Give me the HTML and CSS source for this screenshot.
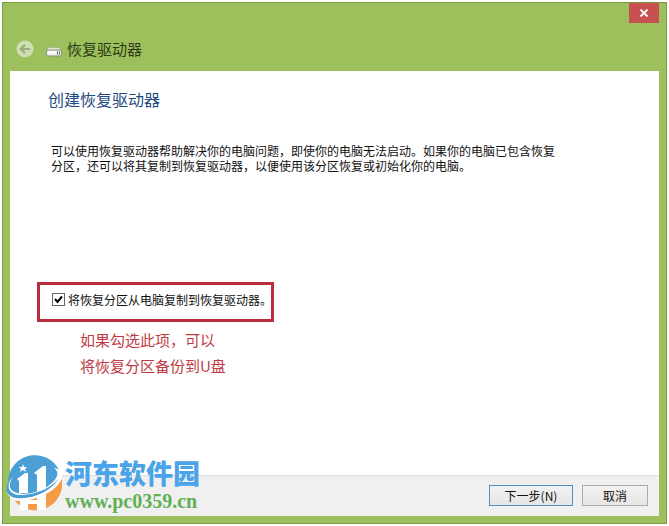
FILE: index.html
```
<!DOCTYPE html>
<html lang="zh-CN">
<head>
  <meta charset="UTF-8">
  <meta name="viewport" content="width=device-width, initial-scale=1.0">
  <title>恢复驱动器</title>
  <link rel="stylesheet" href="styles.css">
</head>
<body>
  <div class="window">
    <!-- Title bar -->
    <header class="titlebar">
      <button type="button" class="close" aria-label="关闭">
        <svg width="10" height="8" viewBox="0 0 10 8"><path d="M1.5 0.5 L8.5 7.5 M8.5 0.5 L1.5 7.5" stroke="#fff" stroke-width="1.8"/></svg>
      </button>
      <div class="caption">
        <button type="button" class="back" aria-label="返回">
          <svg width="18" height="18" viewBox="0 0 18 18">
            <circle cx="9" cy="9" r="8.5" fill="#cfdeb2"/>
            <path d="M14 9 H5 M9 4.8 L4.8 9 L9 13.2" fill="none" stroke="#98b17a" stroke-width="2.2"/>
          </svg>
        </button>
        <svg class="drive" width="16" height="10" viewBox="0 0 16 10">
          <path d="M2.5 0.5 H13.5 L15.5 4 H0.5 Z" fill="#e3e9d6" stroke="#a3aa94" stroke-width="0.6"/>
          <rect x="0.5" y="3" width="15" height="6" rx="1.5" fill="#eceee9" stroke="#858d7b"/>
          <path d="M2 5.5 H10" stroke="#fff" stroke-width="2"/>
          <path d="M11.5 4.5 V7.5 M13.5 4.5 V7.5" stroke="#5d6658"/>
        </svg>
        <span class="name">恢复驱动器</span>
      </div>
    </header>

    <!-- Page content -->
    <main class="page">
      <h1>创建恢复驱动器</h1>
      <p class="intro">可以使用恢复驱动器帮助解决你的电脑问题，即使你的电脑无法启动。如果你的电脑已包含恢复分区，还可以将其复制到恢复驱动器，以便使用该分区恢复或初始化你的电脑。</p>
      <div class="option">
        <input type="checkbox" id="copyPartition" checked>
        <label for="copyPartition">将恢复分区从电脑复制到恢复驱动器。</label>
      </div>
      <p class="note">如果勾选此项，可以<br>将恢复分区备份到U盘</p>
    </main>

    <!-- Buttons -->
    <footer class="actions">
      <button type="button" class="btn next">下一步(N)</button>
      <button type="button" class="btn cancel">取消</button>
    </footer>
  </div>

  <!-- Site watermark -->
  <div class="watermark">
    <svg width="58" height="58" viewBox="0 0 58 58">
      <!-- sky and ground halves -->
      <path d="M4 26 A27 27 0 0 1 57 20 C50 32 36 38 22 39 C10 39 4 35 4 26 Z" fill="#4b9fd5"/>
      <path d="M11 46 C30 46 49 37 58 24 A27 27 0 0 1 11 46 Z" fill="#f59b46"/>
      <!-- orbit -->
      <path d="M10 21 C4 27 4 35 12 38 C26 42 48 33 53 21 C54 18 53 15 50 13 C58 14 60 20 56 27 C48 39 29 47 13 45 C-1 42 1 29 10 21 Z" fill="#fff"/>
      <path d="M6 25 C0 32 1 41 12 43 C29 45 49 35 55 23 C50 31 32 40 17 40 C7 40 2 34 6 25 Z" fill="#4b9fd5"/>
      <!-- towers -->
      <path d="M13 24 L21 18 H24 V38 H15 V26 Z M30 18 L39 11 H42 V34 L33 37 V20 Z" fill="#fff"/>
      <path d="M16 44 L24 43 V45 H33 V41 L42 37 V55 H33 V49 H24 V55 H16 Z" fill="#fff"/>
      <path d="M19 9 L20 12 L23 12 L21 14 L22 17 L19 15 L16 17 L17 14 L15 12 L18 12 Z" fill="#fff"/>
    </svg>
    <div class="site">
      <span class="site-name">河东软件园</span>
      <span class="site-url">www.pc0359.cn</span>
    </div>
  </div>
</body>
</html>
```
FILE: styles.css
```
* {
  box-sizing: border-box;
}

body {
  margin: 0;
  padding: 2px 2px 2px 2px;
  height: 100vh;
  background-color: #fff;
  font-family: "Noto Sans CJK SC", sans-serif;
  font-size: 12px;
  color: #111;
}

button {
  font-family: inherit;
  padding: 0;
}

svg {
  display: block;
}

.window {
  display: flex;
  flex-direction: column;
  height: 100%;
  padding: 0 7px 7px;
  background-color: #9dc05c;
  border: 1px solid #7b9a45;
}

/* Title bar */
.titlebar {
  display: flex;
  flex-direction: column;
  height: 68px;
}

.close {
  display: flex;
  align-items: center;
  justify-content: center;
  align-self: flex-end;
  width: 30px;
  height: 20px;
  background-color: #c75050;
  border: none;
}

.caption {
  display: flex;
  align-items: center;
  margin-top: 15px;
  padding-left: 6px;
}

.back {
  background: none;
  border: none;
}

.drive {
  margin: 5px 5px 0 12px;
}

.name {
  font-size: 15px;
  line-height: 22px;
  color: #2c3a18;
}

/* Page content */
.page {
  flex: 1;
  padding: 16px 38px 0;
  background-color: #fff;
}

h1 {
  margin: 0;
  font-size: 16px;
  font-weight: 400;
  line-height: 24px;
  color: #1f4a80;
}

.intro {
  max-width: 508px;
  margin: 32px 0 0 3px;
  line-height: 15px;
}

.option {
  display: flex;
  align-items: flex-start;
  gap: 3px;
  width: 237px;
  height: 40px;
  margin: 109px 0 0 -11px;
  padding: 8px 0 0 12px;
  border: 3px solid #b92d3f;
}

.option input {
  appearance: none;
  flex: none;
  width: 13px;
  height: 13px;
  margin: 0;
  background: #fff url("data:image/svg+xml,%3Csvg xmlns='http://www.w3.org/2000/svg' viewBox='0 0 11 11'%3E%3Cpath d='M2 5 L4.5 8 L9 2.5' fill='none' stroke='%23000' stroke-width='2'/%3E%3C/svg%3E") center / 11px no-repeat;
  border: 1px solid #666;
}

.option label {
  line-height: 13px;
  white-space: nowrap;
}

.note {
  margin: 5px 0 0 32px;
  font-size: 15px;
  line-height: 26px;
  color: #c03a44;
}

/* Buttons */
.actions {
  display: flex;
  justify-content: flex-end;
  gap: 9px;
  padding: 9px 11px 10px;
  background-color: #f0f0f0;
  border-top: 1px solid #dfdfdf;
}

.btn {
  height: 21px;
  font-size: 12px;
  line-height: 18px;
  color: #111;
  background: linear-gradient(#f2f2f2, #e6e6e6);
  border: 1px solid #acacac;
}

.next {
  width: 84px;
  border-color: #4a90c4;
}

.cancel {
  width: 66px;
}

/* Site watermark */
.watermark {
  position: absolute;
  left: 4px;
  bottom: 13px;
  display: flex;
  gap: 3px;
}

.site {
  display: flex;
  flex-direction: column;
}

.site-name {
  font-size: 27px;
  font-weight: 900;
  line-height: 36px;
  color: #4ba3e8;
}

.site-url {
  font-family: "Liberation Serif", serif;
  font-size: 20px;
  font-weight: 700;
  line-height: 20px;
  color: #62b055;
}
```
